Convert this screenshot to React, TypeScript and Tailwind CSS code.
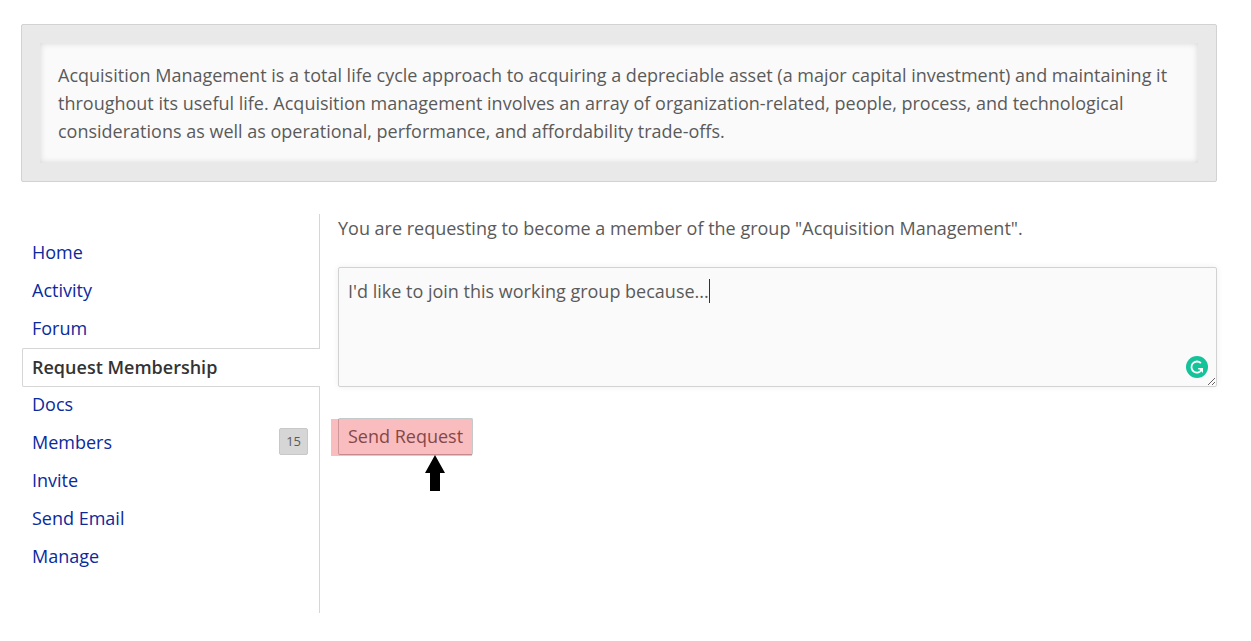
import React, { useState } from 'react';

interface NavItem {
  label: string;
  href: string;
  count?: number;
  current?: boolean;
}

const navItems: NavItem[] = [
  { label: 'Home', href: '#home' },
  { label: 'Activity', href: '#activity' },
  { label: 'Forum', href: '#forum' },
  { label: 'Request Membership', href: '#request-membership', current: true },
  { label: 'Docs', href: '#docs' },
  { label: 'Members', href: '#members', count: 15 },
  { label: 'Invite', href: '#invite' },
  { label: 'Send Email', href: '#send-email' },
  { label: 'Manage', href: '#manage' },
];

const GroupDescription: React.FC = () => (
  <div className="rounded-xs border border-[#d2d2d2] bg-[#e9e9e9] p-[18px]">
    <p className="bg-[#fafafa] p-[18px] shadow-[inset_0_0_6px_#d4d4d4]">
      Acquisition Management is a total life cycle approach to acquiring a depreciable asset (a major capital
      investment) and maintaining it throughout its useful life. Acquisition management involves an array of
      organization-related, people, process, and technological considerations as well as operational, performance,
      and affordability trade-offs.
    </p>
  </div>
);

const GroupNav: React.FC = () => (
  <nav className="w-1/4 shrink-0 border-r border-[#d6d6d6] pt-[19px] pb-[38px]">
    <ul>
      {navItems.map((item) =>
        item.current ? (
          <li key={item.label} className="relative mt-px -mr-px -mb-0.5 ml-px">
            <a
              href={item.href}
              className="flex h-[39px] items-start rounded-l-xs border border-r-0 border-[#d6d6d6] bg-white px-[9px] pt-1 font-semibold text-[#333333]"
            >
              {item.label}
            </a>
          </li>
        ) : (
          <li key={item.label}>
            <a href={item.href} className="flex h-[38px] items-center justify-between px-[11px] text-[#0b2a9c]">
              {item.label}
              {item.count !== undefined && (
                <span className="mb-0.5 rounded-xs border border-[#c8c8c8] bg-[#d6d6d6] px-1.5 py-1 text-[13px] leading-[17px] text-[#5a5a5a]">
                  {item.count}
                </span>
              )}
            </a>
          </li>
        )
      )}
    </ul>
  </nav>
);

const WritingBadge: React.FC = () => (
  <svg className="absolute right-[9px] bottom-[9px] h-[22px] w-[22px]" viewBox="0 0 22 22" aria-hidden="true">
    <circle cx="11" cy="11" r="11" fill="#15c39a" />
    <path
      d="M14.9 7.2A5.5 5.5 0 1 0 15.9 13.4"
      fill="none"
      stroke="#ffffff"
      strokeWidth="1.8"
    />
    <path d="M12.2 12H17V17L15.3 15.3L13.9 13.6H12.2Z" fill="#ffffff" />
  </svg>
);

const RequestForm: React.FC = () => {
  const [message, setMessage] = useState("I'd like to join this working group because...");

  return (
    <form className="min-w-0 flex-1 pl-[18px]" onSubmit={(e) => e.preventDefault()}>
      <label htmlFor="message" className="block">
        You are requesting to become a member of the group "Acquisition Management".
      </label>

      <div className="relative mt-[25px]">
        <textarea
          id="message"
          value={message}
          onChange={(e) => setMessage(e.target.value)}
          className="block h-[120px] w-full resize rounded-xs border border-[#d2d2d2] bg-[#fafafa] px-[9px] py-[9px] shadow-[0_0_6px_#eeeeee] outline-none"
        />
        {/* text cursor */}
        <span className="absolute top-3 left-[371px] h-6 w-px bg-[#333333]" />
        <WritingBadge />
      </div>

      <div className="relative mt-[31px] inline-block">
        <button
          type="submit"
          className="block rounded-xs border border-[#c4c9c9] border-b-[#b8b8b8] bg-white px-[9px] pt-[3px] pb-1"
        >
          Send Request
        </button>
        <span className="pointer-events-none absolute top-px right-px -bottom-px -left-[7px] bg-[#ec1c24]/29" />
        <svg
          className="absolute top-[37px] right-7 h-9 w-5"
          viewBox="0 0 20 36"
          aria-hidden="true"
        >
          <path d="M10 0L20 18H15V36H5V18H0Z" fill="#000000" />
        </svg>
      </div>
    </form>
  );
};

const App: React.FC = () => {
  return (
    <div className="min-h-screen bg-white pt-6 pr-[34px] pb-7 pl-[21px] font-['Open_Sans','Liberation_Sans',sans-serif] text-lg leading-7 text-[#5a5a5a]">
      <GroupDescription />
      <main className="mt-8 flex items-start">
        <GroupNav />
        <RequestForm />
      </main>
    </div>
  );
};

export default App;
